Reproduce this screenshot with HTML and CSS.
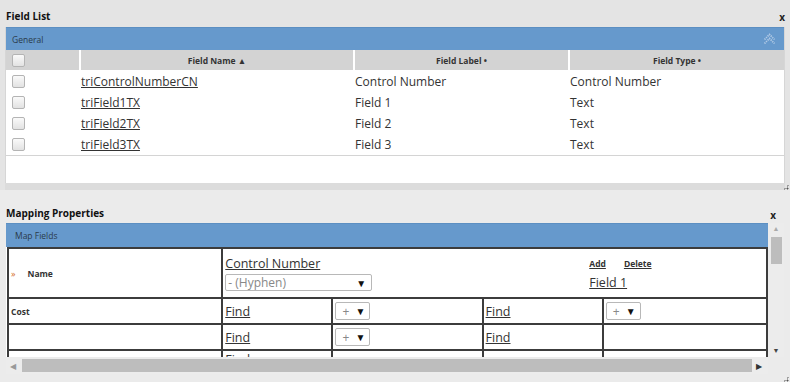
FILE: index.html
```html
<!DOCTYPE html>
<html>
<head>
<meta charset="utf-8">
<link rel="stylesheet" href="styles.css">
</head>
<body>
<div class="page">
  <section class="panel panel-top">
    <div class="title-row"><span class="title">Field List</span><span class="close">x</span></div>
    <div class="box">
      <div class="bar"><span class="bar-label">General</span>
        <svg class="collapse" width="13" height="12" viewBox="0 0 13 12"><path d="M1.5 6.5 L6.5 1.5 L11.5 6.5 M1.5 10.5 L6.5 5.5 L11.5 10.5" fill="none" stroke="#b3cbe6" stroke-width="1.7" stroke-dasharray="1.3 0.9"/></svg>
      </div>
      <table class="grid">
        <thead>
          <tr>
            <th class="c-chk"><span class="chk"></span></th>
            <th class="c-name">Field Name ▲</th>
            <th class="c-label">Field Label •</th>
            <th class="c-type">Field Type •</th>
          </tr>
        </thead>
        <tbody>
          <tr class="first"><td class="c-chk"><span class="chk"></span></td><td><a href="#">triControlNumberCN</a></td><td>Control Number</td><td>Control Number</td></tr>
          <tr><td class="c-chk"><span class="chk"></span></td><td><a href="#">triField1TX</a></td><td>Field 1</td><td>Text</td></tr>
          <tr><td class="c-chk"><span class="chk"></span></td><td><a href="#">triField2TX</a></td><td>Field 2</td><td>Text</td></tr>
          <tr><td class="c-chk"><span class="chk"></span></td><td><a href="#">triField3TX</a></td><td>Field 3</td><td>Text</td></tr>
        </tbody>
      </table>
    </div>
    <div class="grip-band"><span class="grip"></span></div>
  </section>

  <section class="panel panel-bottom">
    <div class="title-row title-row2"><span class="title">Mapping Properties</span><span class="close close2">x</span></div>
    <div class="box2">
      <div class="main-col">
        <div class="bar bar2"><span class="bar-label">Map Fields</span></div>
        <div class="viewport">
          <table class="map">
            <colgroup><col class="w1"><col class="w2"><col class="w3"><col class="w4"><col class="w5"></colgroup>
            <tr class="r1">
              <td class="name-cell"><span class="marker">»</span><b>Name</b></td>
              <td colspan="4" class="head-cell">
                <div class="head-flex">
                  <div class="head-left">
                    <a href="#" class="big-link">Control Number</a>
                    <div class="select sel-wide"><span>- (Hyphen)</span><span class="arrow">▼</span></div>
                  </div>
                  <div class="head-right">
                    <div class="actions"><a href="#">Add </a><a href="#">Delete</a></div>
                    <a href="#" class="big-link">Field 1</a>
                  </div>
                </div>
              </td>
            </tr>
            <tr class="r2">
              <td class="name-cell"><b>Cost</b></td>
              <td><a href="#" class="big-link">Find</a></td>
              <td><div class="select sel-small"><span>+</span><span class="arrow">▼</span></div></td>
              <td><a href="#" class="big-link">Find</a></td>
              <td><div class="select sel-small"><span>+</span><span class="arrow">▼</span></div></td>
            </tr>
            <tr class="r2">
              <td class="name-cell"></td>
              <td><a href="#" class="big-link">Find</a></td>
              <td><div class="select sel-small"><span>+</span><span class="arrow">▼</span></div></td>
              <td><a href="#" class="big-link">Find</a></td>
              <td></td>
            </tr>
            <tr class="r2 r4">
              <td class="name-cell"></td>
              <td><a href="#" class="big-link">Find</a></td>
              <td></td>
              <td></td>
              <td></td>
            </tr>
          </table>
        </div>
        <div class="hscroll">
          <span class="harrow">◀</span>
          <span class="hthumb"></span>
          <span class="harrow">▶</span>
        </div>
      </div>
      <div class="vscroll">
        <span class="varrow">▲</span>
        <span class="vthumb"></span>
        <span class="vspace"></span>
        <span class="varrow dark">▼</span>
      </div>
    </div>
    <div class="grip-band2"><span class="grip"></span></div>
  </section>
</div>
</body>
</html>
```

FILE: styles.css
```css
html, body {
  margin: 0;
  padding: 0;
}
body {
  background: #e4e4e4;
  font-family: "Open Sans", "Liberation Sans", sans-serif;
  color: #333;
  width: 790px;
  height: 382px;
  overflow: hidden;
}
a { color: #333; }

.title-row {
  height: 27px;
  display: flex;
  align-items: flex-end;
  justify-content: space-between;
  padding: 0 5px 0 6px;
  box-sizing: border-box;
}
.title {
  font-size: 10px;
  font-weight: bold;
  line-height: 14px;
  margin-bottom: 4px;
  color: #111;
}
.close {
  font-size: 10px;
  font-weight: bold;
  line-height: 10px;
  margin-bottom: 5px;
  color: #222;
}

.box {
  margin: 0 5px 0 5px;
  background: #fff;
  border-left: 1px solid #d6d6d6;
  border-right: 1px solid #d6d6d6;
  height: 156px;
  box-sizing: border-box;
}
.bar {
  flex: none;
  height: 23px;
  background: #6699cc;
  border-top: 1px solid #5c8fc2;
  box-sizing: border-box;
  display: flex;
  align-items: center;
  justify-content: space-between;
  padding: 0 8px 0 6px;
}
.bar-label {
  font-size: 8.5px;
  color: #2a3a4a;
}
.collapse { display: block; }

.grid {
  width: 100%;
  border-collapse: collapse;
  border-bottom: 1px solid #d4d4d4;
}
.grid th {
  background: #d3d3d3;
  height: 20px;
  font-size: 8.5px;
  font-weight: bold;
  color: #333;
  border-left: 2px solid #fff;
  padding: 0;
  text-align: center;
}
.grid th.c-chk { border-left: none; text-align: left; }
.grid .c-chk { width: 67px; padding-left: 6px; }
.grid .c-name { width: 272px; }
.grid .c-label { width: 213px; }
.grid td {
  height: 21px;
  font-size: 12px;
  padding: 0 0 0 1px;
  line-height: 16px;
}
.grid tr.first td { padding-top: 1px; }
.grid td.c-chk { padding-left: 6px; }
.chk {
  display: block;
  width: 11px;
  height: 11px;
  border: 1px solid #b4b4b4;
  border-radius: 2px;
  background: linear-gradient(#fafafa, #e2e2e2);
}

.grip-band {
  height: 7px;
  margin: 0 5px;
  background: #dcdcdc;
  position: relative;
}
.grip {
  position: absolute;
  right: -4px;
  bottom: 0;
  width: 6px;
  height: 6px;
  background:
    radial-gradient(circle, #555 0.9px, transparent 1.1px) 0 0 / 3px 3px;
  clip-path: polygon(100% 0, 100% 100%, 0 100%);
}

.panel-bottom {
  background: #ebebeb;
  height: 192px;
}
.title-row2 {
  height: 33px;
  padding-right: 14px;
}
.title-row2 .title { margin-bottom: 3px; }
.close2 { margin-bottom: 3px; }

.box2 {
  margin: 0 6px 0 6px;
  display: flex;
  height: 151px;
}
.main-col {
  width: 762px;
  display: flex;
  flex-direction: column;
}
.bar2 {
  height: 24px;
  padding-left: 9px;
}
.viewport {
  height: 110px;
  overflow: hidden;
  background: #fff;
  flex: none;
}
.map {
  border-collapse: collapse;
  width: 761px;
  table-layout: fixed;
  margin-left: 1px;
}
.w1 { width: 214px; }
.w2 { width: 110px; }
.w3 { width: 150px; }
.w4 { width: 120px; }
.w5 { width: 164px; }
.map td {
  border: 2px solid #3c3c3c;
  padding: 0 2px;
  font-size: 12.5px;
  vertical-align: middle;
}
.map tr.r1 td { height: 48px; }
.map tr.r2 td { height: 24px; }
.map tr.r4 td { vertical-align: top; }
.map tr.r4 .big-link { display: inline-block; margin-top: -4px; }
.map td.name-cell {
  font-size: 8px;
  padding-left: 2px;
}
.name-cell b { font-size: 8.5px; }
.marker {
  color: #d46a2a;
  font-size: 9px;
  margin-right: 12px;
}
.big-link { font-size: 12.5px; line-height: 17px; }
.head-flex { display: flex; }
.head-left { width: 364px; display: flex; flex-direction: column; }
.head-right { display: flex; flex-direction: column; padding-top: 2px; }
.actions { display: flex; gap: 18px; font-size: 8.5px; font-weight: bold; line-height: 14px; margin-bottom: 3px; }
.select {
  display: flex;
  justify-content: space-between;
  align-items: center;
  border: 1px solid #b8b8b8;
  border-radius: 2px;
  background: #fff;
  box-sizing: border-box;
  color: #888;
  font-size: 12px;
}
.sel-wide {
  width: 147px;
  height: 17px;
  padding: 0 5px 0 2px;
  margin-top: 2px;
}
.sel-small {
  width: 35px;
  height: 18px;
  padding: 0 4px 0 6px;
}
.arrow { color: #111; font-size: 10px; }

.hscroll {
  flex: none;
  height: 17px;
  background: #ececec;
  display: flex;
  align-items: center;
  padding: 0 4px 0 4px;
  gap: 4px;
  box-sizing: border-box;
}
.harrow { font-size: 8px; color: #999; width: 8px; }
.hscroll .harrow:last-child { color: #333; }
.hthumb {
  flex: 1;
  height: 13px;
  background: #bdbdbd;
}
.vscroll {
  width: 16px;
  height: 134px;
  background: #ececec;
  display: flex;
  flex-direction: column;
  align-items: center;
}
.varrow { font-size: 7px; color: #aaa; line-height: 12px; }
.varrow.dark { color: #444; }
.vthumb {
  width: 11px;
  height: 27px;
  background: #bdbdbd;
  margin-top: 2px;
}
.vspace { flex: 1; }
.grip-band2 {
  position: relative;
  height: 8px;
  margin: 0 5px;
}
```
